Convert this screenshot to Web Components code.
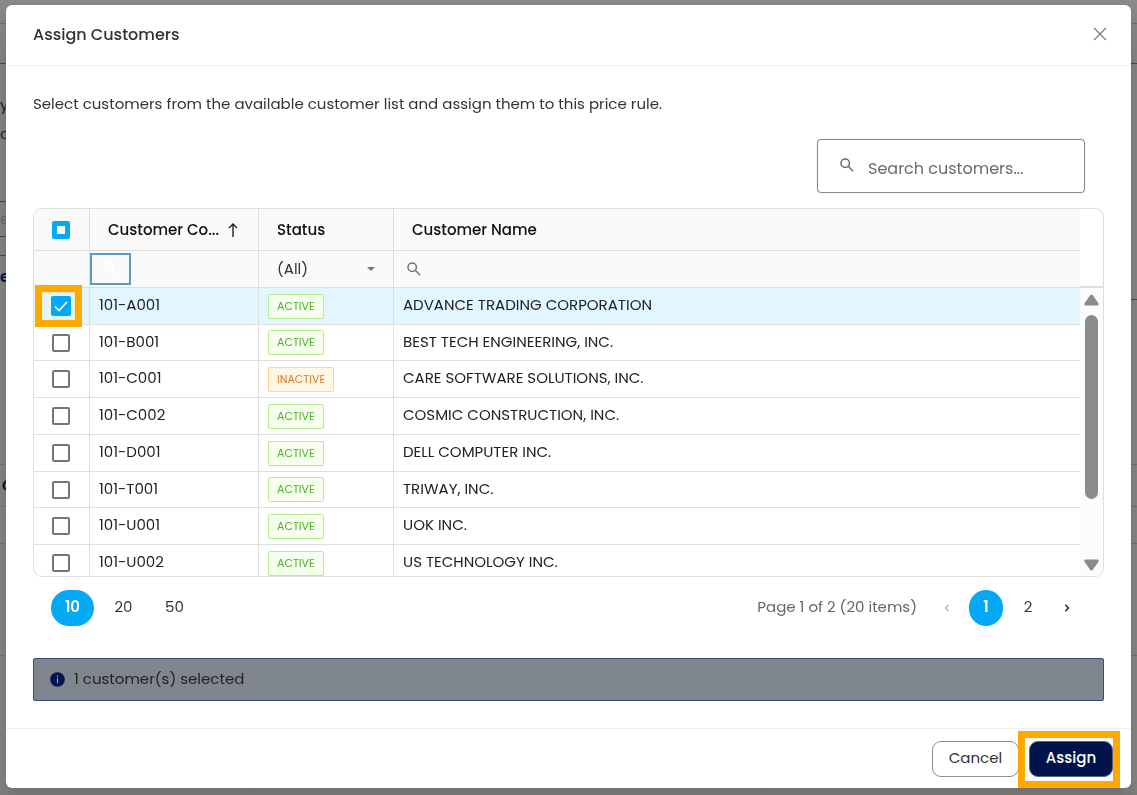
<!DOCTYPE html>
<html lang="en">
<head>
<meta charset="UTF-8">
<title>Assign Customers</title>
<style>
  body {
    margin: 0;
    height: 100vh;
    overflow: hidden;
    font-family: Poppins, Inter, sans-serif;
    font-size: 15px;
    line-height: 22px;
    color: #333;
    background: #858585;
  }
</style>
</head>
<body>
<price-rule-page></price-rule-page>
<assign-dialog heading="Assign Customers">
  <dialog-intro>Select customers from the available customer list and assign them to this price rule.</dialog-intro>
  <search-box placeholder="Search customers..."></search-box>
  <customer-grid></customer-grid>
  <grid-pager></grid-pager>
  <info-banner>1 customer(s) selected</info-banner>
  <action-button slot="actions">Cancel</action-button>
  <action-button slot="actions" primary highlighted>Assign</action-button>
</assign-dialog>

<script>
const SEARCH_ICON = `
  <svg viewBox="0 0 14 14" width="14" height="14" fill="none" stroke="currentColor" stroke-width="1.5" aria-hidden="true">
    <circle cx="5.2" cy="5.2" r="4.2"/>
    <path d="M8.3 8.3l4.9 4.9"/>
  </svg>`;

// Dimmed page that stays visible around the dialog
class PriceRulePage extends HTMLElement {
  constructor() {
    super();
    this.attachShadow({ mode: "open" });
  }

  connectedCallback() {
    this.shadowRoot.innerHTML = `
      <style>
        :host {
          position: fixed;
          inset: 0;
          display: grid;
          grid-template-columns: 1fr 1fr;
          background: linear-gradient(#8b8b8b, #848484 60px, #848484 780px, #7d7d7d);
        }

        .row {
          box-sizing: border-box;
          display: flex;
          flex-direction: column;
          justify-content: flex-end;
          border-bottom: 1px solid #707070;
          line-height: 29px;
          overflow: hidden;
          color: #222;
        }

        .dark { border-color: #484848; }
        .tail { padding-bottom: 53px; }
        .field { color: #666; line-height: 34px; }
        .link { color: #00134d; font-weight: 600; justify-content: flex-start; line-height: 42px; }
        .title { color: #111; font-weight: 600; padding-left: 2px; line-height: 41px; }
      </style>

      <div>
        <div class="row" style="height: 24px"></div>
        <div class="row dark" style="height: 40px"></div>
        <div class="row dark tail" style="height: 138px"><span>y</span><span>c</span></div>
        <div class="row dark field" style="height: 35px">e</div>
        <div class="row dark" style="height: 19px"></div>
        <div class="row link" style="height: 209px">e</div>
        <div class="row title" style="height: 42px">C</div>
        <div class="row" style="height: 37px"></div>
        <div class="row" style="height: 112px"></div>
      </div>
      <div>
        <div class="row" style="height: 24px"></div>
        <div class="row dark" style="height: 40px"></div>
        <div class="row dark" style="height: 236px"></div>
        <div class="row" style="height: 165px"></div>
        <div class="row" style="height: 42px"></div>
        <div class="row" style="height: 37px"></div>
        <div class="row" style="height: 112px"></div>
      </div>
    `;
  }
}

class AssignDialog extends HTMLElement {
  constructor() {
    super();
    this.attachShadow({ mode: "open" });
  }

  connectedCallback() {
    const heading = this.getAttribute("heading") || "";

    this.shadowRoot.innerHTML = `
      <style>
        :host {
          position: relative;
          display: flex;
          box-sizing: border-box;
          height: 100%;
          padding: 5px 6px 7px;
        }

        .dialog {
          flex: 1;
          display: flex;
          flex-direction: column;
          background: #fff;
          border-radius: 6px;
          box-shadow: 0 6px 16px rgba(0, 0, 0, 0.15);
        }

        header {
          display: flex;
          align-items: center;
          justify-content: space-between;
          height: 60px;
          padding: 0 24px 0 27px;
          border-bottom: 1px solid #eee;
        }

        h1 {
          margin: 0;
          font-size: 16px;
          font-weight: 500;
        }

        .close {
          display: flex;
          padding: 0 0 2px;
          border: 0;
          background: none;
          color: #7c7c7c;
        }

        main {
          flex: 1;
          display: flex;
          flex-direction: column;
          padding: 27px 27px 0;
        }

        footer {
          display: flex;
          justify-content: flex-end;
          gap: 10px;
          padding: 12px 18px 11px;
          border-top: 1px solid #eee;
        }
      </style>

      <div class="dialog" role="dialog" aria-labelledby="heading">
        <header>
          <h1 id="heading">${heading}</h1>
          <button class="close" aria-label="Close">
            <svg viewBox="0 0 14 14" width="14" height="14" fill="none" stroke="currentColor" stroke-width="1.3"><path d="M1 1l12 12M13 1L1 13"/></svg>
          </button>
        </header>
        <main><slot></slot></main>
        <footer><slot name="actions"></slot></footer>
      </div>
    `;
  }
}

class DialogIntro extends HTMLElement {
  constructor() {
    super();
    this.attachShadow({ mode: "open" });
  }

  connectedCallback() {
    this.shadowRoot.innerHTML = `
      <style>
        :host { display: block; margin-bottom: 24px; }
        p { margin: 0; }
      </style>
      <p><slot></slot></p>
    `;
  }
}

class SearchBox extends HTMLElement {
  constructor() {
    super();
    this.attachShadow({ mode: "open" });
  }

  connectedCallback() {
    const placeholder = this.getAttribute("placeholder") || "Search";

    this.shadowRoot.innerHTML = `
      <style>
        :host {
          display: block;
          align-self: flex-end;
          margin: 0 19px 15px 0;
        }

        label {
          box-sizing: border-box;
          display: flex;
          gap: 14px;
          width: 268px;
          height: 54px;
          padding: 0 22px;
          border: 1px solid #8c8c8c;
          border-radius: 4px;
          box-shadow: 0 0 1px #8c8c8c;
          color: #6b6b6b;
        }

        svg { padding-top: 18px; }

        input {
          flex: 1;
          min-width: 0;
          padding: 5px 0 0;
          border: 0;
          outline: 0;
          background: none;
          font: inherit;
          font-size: 16px;
          color: #333;
        }

        input::placeholder { color: #6b6b6b; }
      </style>
      <label>
        ${SEARCH_ICON}
        <input type="text" placeholder="${placeholder}" aria-label="${placeholder}">
      </label>
    `;
  }
}

class CheckBox extends HTMLElement {
  constructor() {
    super();
    this.attachShadow({ mode: "open" });
  }

  connectedCallback() {
    const label = this.getAttribute("label") || "Select";

    this.shadowRoot.innerHTML = `
      <style>
        :host {
          position: relative;
          display: flex;
          justify-content: center;
        }

        input {
          appearance: none;
          width: 18px;
          height: 18px;
          margin: 0;
          border: 2px solid #757575;
          border-radius: 2px;
          background: #fff;
        }

        input:indeterminate {
          border: 5px solid #03a9f4;
        }

        input:checked {
          width: 20px;
          height: 20px;
          border: 0;
          background: #03a9f4;
        }

        .tick {
          display: none;
          position: absolute;
          inset: 0;
          margin: auto;
          pointer-events: none;
        }

        input:checked + .tick { display: block; }

        :host([highlighted])::after {
          content: "";
          position: absolute;
          inset: -11px 6px -11px 1px;
          border: 7px solid #ffa900;
          box-shadow: inset 0 0 0 1px #f4ecc4;
          pointer-events: none;
        }
      </style>
      <input type="checkbox" aria-label="${label}">
      <svg class="tick" viewBox="0 0 14 14" width="14" height="14" fill="none" stroke="#fff" stroke-width="1.7"><path d="M1 7.5l4 4 8-8.5"/></svg>
    `;

    const input = this.shadowRoot.querySelector("input");
    input.checked = this.hasAttribute("checked");
    input.indeterminate = this.hasAttribute("indeterminate");
  }
}

class StatusTag extends HTMLElement {
  constructor() {
    super();
    this.attachShadow({ mode: "open" });
  }

  connectedCallback() {
    this.shadowRoot.innerHTML = `
      <style>
        :host {
          display: inline-block;
          box-sizing: border-box;
          height: 25px;
          padding: 0 8px;
          border: 1px solid #b7eb8f;
          border-radius: 2px;
          background: #f6ffed;
          color: #4fae2c;
          font-size: 11px;
          line-height: 23px;
        }

        :host([value="INACTIVE"]) {
          border-color: #ffd591;
          background: #fff7e6;
          color: #dd7a22;
        }
      </style>
      ${this.getAttribute("value")}
    `;
  }
}

class CustomerGrid extends HTMLElement {
  constructor() {
    super();
    this.attachShadow({ mode: "open" });

    this.customers = [
      { code: "101-A001", status: "ACTIVE", name: "ADVANCE TRADING CORPORATION", selected: true },
      { code: "101-B001", status: "ACTIVE", name: "BEST TECH ENGINEERING, INC." },
      { code: "101-C001", status: "INACTIVE", name: "CARE SOFTWARE SOLUTIONS, INC." },
      { code: "101-C002", status: "ACTIVE", name: "COSMIC CONSTRUCTION, INC." },
      { code: "101-D001", status: "ACTIVE", name: "DELL COMPUTER INC." },
      { code: "101-T001", status: "ACTIVE", name: "TRIWAY, INC." },
      { code: "101-U001", status: "ACTIVE", name: "UOK INC." },
      { code: "101-U002", status: "ACTIVE", name: "US TECHNOLOGY INC." },
    ];
  }

  connectedCallback() {
    const rows = this.customers.map((c) => `
      <tr${c.selected ? ' class="selected"' : ""}>
        <td class="check"><check-box label="Select ${c.code}"${c.selected ? " checked highlighted" : ""}></check-box></td>
        <td><div class="text">${c.code}</div></td>
        <td><status-tag value="${c.status}"></status-tag></td>
        <td><div class="text">${c.name}</div></td>
      </tr>`).join("");

    this.shadowRoot.innerHTML = `
      <style>
        :host {
          display: grid;
          grid-template-columns: 1fr 23px;
          grid-template-rows: 100%;
          height: 367px;
          border: 1px solid #dedede;
          border-radius: 9px;
          overflow: hidden;
          color: #222;
        }

        table {
          table-layout: fixed;
          width: 100%;
          border-collapse: separate;
          border-spacing: 0;
        }

        .col-check { width: 56px; }
        .col-code { width: 169px; }
        .col-status { width: 135px; }

        tr { height: 37px; }
        tbody tr:nth-child(4n + 2) { height: 36px; }

        th, td {
          box-sizing: border-box;
          padding: 0 9px;
          border-right: 1px solid #dedede;
          border-bottom: 1px solid #dedede;
          text-align: left;
          vertical-align: middle;
        }

        th:last-child, td:last-child { border-right: 0; }
        .text { padding-bottom: 2px; }
        status-tag { vertical-align: middle; }
        .selected { background: #e3f5fe; }

        thead { background: #fafafa; }
        thead tr:first-child { height: 42px; }

        th {
          padding: 0 18px;
          font-weight: 500;
          color: #111;
        }

        .check { padding: 0 1px 0 0; }

        .sortable {
          display: flex;
          align-items: center;
          justify-content: space-between;
        }

        .filter {
          display: flex;
          align-items: center;
          height: 32px;
          color: #757575;
        }

        .filter input {
          flex: 1;
          min-width: 0;
          border: 0;
          outline: 0;
          background: none;
          font: inherit;
        }

        .code { padding: 0; }

        .focus {
          box-sizing: border-box;
          display: flex;
          align-items: center;
          justify-content: center;
          width: 41px;
          height: 32px;
          border: 2px solid #5f98ca;
          color: #fff;
        }

        .name { padding-left: 13px; }
        .status { padding: 0 18px; }

        select {
          appearance: none;
          width: 100%;
          padding: 0;
          border: 0;
          background: none;
          font: inherit;
          color: #333;
        }

        .caret {
          border: 4px solid transparent;
          border-top-color: #757575;
          border-bottom: 0;
          pointer-events: none;
        }

        .gutter {
          display: grid;
          grid-template-rows: 77px 1fr;
        }

        .scrollbar {
          display: flex;
          flex-direction: column;
          align-items: center;
          padding: 6px 0 5px;
          border-top: 2px solid #dedede;
          background: #fcfcfc;
        }

        .thumb {
          width: 13px;
          height: 184px;
          margin: 9px 0 auto;
          border-radius: 7px;
          background: #8b8b8b;
        }
      </style>

      <table>
        <colgroup><col class="col-check"><col class="col-code"><col class="col-status"><col></colgroup>
        <thead>
          <tr>
            <th class="check"><check-box label="Select all" indeterminate></check-box></th>
            <th>
              <div class="sortable">Customer Co...
                <svg viewBox="0 0 14 14" width="14" height="14" fill="none" stroke="#222" stroke-width="1.4"><path d="M7 14V1.4M3 5l4-4 4 4"/></svg>
              </div>
            </th>
            <th>Status</th>
            <th>Customer Name</th>
          </tr>
          <tr>
            <td></td>
            <td class="code"><label class="filter"><span class="focus">${SEARCH_ICON}</span><input type="text" aria-label="Filter by code"></label></td>
            <td class="status"><div class="filter"><select aria-label="Filter by status"><option>(All)</option><option>ACTIVE</option><option>INACTIVE</option></select><span class="caret"></span></div></td>
            <td class="name"><label class="filter">${SEARCH_ICON}<input type="text" aria-label="Filter by name"></label></td>
          </tr>
        </thead>
        <tbody>${rows}</tbody>
      </table>
      <div class="gutter">
        <div></div>
        <div class="scrollbar">
          <svg viewBox="0 0 15 12" width="15" height="12" fill="#8b8b8b"><path d="M6.3 1.1Q7.5 0 8.7 1.1L14.4 9.2Q15.3 11.2 13.6 11.4H1.4Q-.3 11.2 .6 9.2z"/></svg>
          <div class="thumb"></div>
          <svg viewBox="0 0 15 12" width="15" height="12" fill="#8b8b8b"><path d="M6.3 10.9Q7.5 12 8.7 10.9L14.4 2.8Q15.3 .8 13.6 .6H1.4Q-.3 .8 .6 2.8z"/></svg>
        </div>
      </div>
    `;
  }
}

class GridPager extends HTMLElement {
  constructor() {
    super();
    this.attachShadow({ mode: "open" });
  }

  connectedCallback() {
    this.shadowRoot.innerHTML = `
      <style>
        :host {
          display: flex;
          align-items: center;
          justify-content: space-between;
          padding: 13px 23px 32px 18px;
        }

        div {
          display: flex;
          align-items: center;
          gap: 8px;
        }

        .pages { color: #666; }
        .pages span { padding: 0 8px 2px 0; }

        button {
          width: 34px;
          height: 36px;
          padding: 0 0 2px;
          border: 0;
          border-radius: 18px;
          background: none;
          font: inherit;
          color: #333;
        }

        .sizes button { width: 43px; }
        .pages .arrow { width: 28px; }

        button.current {
          background: #03a9f4;
          color: #fff;
          font-weight: 600;
        }

        button:disabled { color: #bbb; }
      </style>

      <div class="sizes">
        <button class="current">10</button>
        <button>20</button>
        <button>50</button>
      </div>
      <div class="pages">
        <span>Page 1 of 2 (20 items)</span>
        <button class="arrow" disabled aria-label="Previous page"><svg viewBox="0 0 6 8" width="6" height="8" fill="none" stroke="currentColor" stroke-width="1.3"><path d="M4.5 .8L1.3 4l3.2 3.2"/></svg></button>
        <button class="current">1</button>
        <button>2</button>
        <button class="arrow" aria-label="Next page"><svg viewBox="0 0 6 8" width="6" height="8" fill="none" stroke="#222" stroke-width="1.5"><path d="M1.3 .8L4.5 4 1.3 7.2"/></svg></button>
      </div>
    `;
  }
}

class InfoBanner extends HTMLElement {
  constructor() {
    super();
    this.attachShadow({ mode: "open" });
  }

  connectedCallback() {
    this.shadowRoot.innerHTML = `
      <style>
        :host {
          display: flex;
          align-items: center;
          gap: 9px;
          box-sizing: border-box;
          height: 43px;
          padding: 0 16px;
          border: 1px solid #334e7e;
          border-radius: 2px;
          background: #7f868d;
          color: #222;
        }

        span { padding-bottom: 2px; }
      </style>
      <svg viewBox="0 0 15 15" width="15" height="15" aria-hidden="true">
        <circle cx="7.5" cy="7.5" r="7.3" fill="#001550"/>
        <path d="M7.5 3.6v1.4M7.5 6.2v5" stroke="#9aa0a8" stroke-width="1.2"/>
      </svg>
      <span><slot></slot></span>
    `;
  }
}

class ActionButton extends HTMLElement {
  constructor() {
    super();
    this.attachShadow({ mode: "open" });
  }

  connectedCallback() {
    this.shadowRoot.innerHTML = `
      <style>
        :host {
          position: relative;
          display: block;
        }

        button {
          width: 87px;
          height: 36px;
          padding: 0 0 2px;
          border: 1px solid #8c8c8c;
          border-radius: 9px;
          background: #fff;
          font: inherit;
          color: #333;
        }

        :host([primary]) button {
          width: 84px;
          border-color: #5a6078;
          background: #00144b;
          color: #fff;
          font-weight: 500;
        }

        :host([highlighted])::after {
          content: "";
          position: absolute;
          inset: -10px -7px -11px -11px;
          border: 7px solid #ffa900;
          pointer-events: none;
        }
      </style>
      <button><slot></slot></button>
    `;
  }
}

customElements.define("price-rule-page", PriceRulePage);
customElements.define("assign-dialog", AssignDialog);
customElements.define("dialog-intro", DialogIntro);
customElements.define("search-box", SearchBox);
customElements.define("check-box", CheckBox);
customElements.define("status-tag", StatusTag);
customElements.define("customer-grid", CustomerGrid);
customElements.define("grid-pager", GridPager);
customElements.define("info-banner", InfoBanner);
customElements.define("action-button", ActionButton);
</script>
</body>
</html>
